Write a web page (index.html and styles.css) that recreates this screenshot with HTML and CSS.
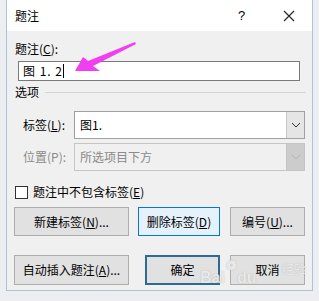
FILE: index.html
```html
<!DOCTYPE html>
<html lang="zh-CN">
<head>
    <meta charset="UTF-8">
    <meta name="viewport" content="width=device-width, initial-scale=1.0">
    <title>题注</title>
    <link rel="stylesheet" href="styles.css">
</head>
<body>
    <div class="window">
        <div class="titlebar">
            <span class="title">题注</span>
            <span class="help">?</span>
            <span class="close">
                <svg width="12" height="12" viewBox="0 0 12 12"><path d="M1 1 L11 11 M11 1 L1 11" stroke="#222" stroke-width="1.1" fill="none"/></svg>
            </span>
        </div>
        <div class="content">
            <div class="field-label">题注(<u>C</u>):</div>
            <div class="caption-input"><span class="caption-text">图 1. 2</span><span class="caret"></span></div>

            <div class="group">
                <span>选项</span>
                <span class="group-line"></span>
            </div>

            <div class="option-row">
                <span class="option-label">标签(<u>L</u>):</span>
                <div class="combo">
                    <span class="combo-text">图1.</span>
                    <span class="combo-btn">
                        <svg width="10" height="6" viewBox="0 0 10 6"><path d="M1 1 L5 5 L9 1" stroke="#333" stroke-width="1" fill="none"/></svg>
                    </span>
                </div>
            </div>
            <div class="option-row second">
                <span class="option-label disabled">位置(P):</span>
                <div class="combo off">
                    <span class="combo-text">所选项目下方</span>
                    <span class="combo-btn">
                        <svg width="10" height="6" viewBox="0 0 10 6"><path d="M1 1 L5 5 L9 1" stroke="#b5b5b5" stroke-width="1" fill="none"/></svg>
                    </span>
                </div>
            </div>

            <div class="check-row">
                <span class="checkbox"></span>
                <span>题注中不包含标签(<u>E</u>)</span>
            </div>

            <div class="button-row">
                <button class="btn wide">新建标签(<u>N</u>)...</button>
                <button class="btn mid focus">删除标签(<u>D</u>)</button>
                <button class="btn narrow gap">编号(<u>U</u>)...</button>
            </div>
            <div class="button-row last">
                <button class="btn wide">自动插入题注(<u>A</u>)...</button>
                <button class="btn narrow default">确定</button>
                <button class="btn narrow gap">取消</button>
            </div>
        </div>
    </div>

    <svg class="arrow" width="319" height="100" viewBox="0 0 319 100">
        <polygon points="75,71 83,57 88,61 135,42 136,44 93,66 100,71" fill="#f03ef0"/>
    </svg>

    <div class="watermark">
        <span>Bai</span><span class="paw">❁</span><span>du</span>
    </div>
    <div class="watermark-jy">经验</div>
</body>
</html>
```

FILE: styles.css
```css
body {
    margin: 0;
    background-color: #eceef2;
    font-family: "Noto Sans CJK SC", "Microsoft YaHei", sans-serif;
    font-size: 12px;
    color: #000;
    width: 319px;
    height: 301px;
    overflow: hidden;
    position: relative;
}

.window {
    margin-left: 6px;
    width: 305px;
    height: 290px;
    background-color: #f0f0f0;
    border: 1px solid #a9c3dd;
    border-top: none;
}

.titlebar {
    height: 31px;
    background-color: #fff;
    display: flex;
    align-items: center;
    padding-left: 8px;
}

.title {
    flex-grow: 1;
    line-height: 16px;
}

.help {
    font-family: "Liberation Sans", sans-serif;
    font-size: 13px;
    width: 12px;
    margin-right: 33px;
}

.close {
    display: flex;
    margin-right: 17px;
}

.content {
    padding: 10px 0 0 8px;
}

.field-label,
.group,
.option-label,
.check-row {
    line-height: 16px;
    height: 16px;
}

u {
    text-decoration: underline;
    text-underline-offset: 1px;
}

.caption-input {
    margin: 4px 0 0 3px;
    height: 18px;
    line-height: 18px;
    background-color: #fff;
    border: 1px solid #7a7a7a;
    padding-left: 4px;
    width: 276px;
    display: flex;
    align-items: center;
}

.caption-text {
    letter-spacing: 1px;
}

.caret {
    display: inline-block;
    width: 1px;
    height: 14px;
    background-color: #000;
}

.group {
    margin-top: 3px;
    display: flex;
    align-items: center;
}

.group-line {
    flex-grow: 1;
    height: 1px;
    background-color: #d5d5d5;
    margin: 1px 6px 0 6px;
}

.option-row {
    margin-top: 11px;
    display: flex;
    align-items: center;
    padding-left: 8px;
}

.option-row.second {
    margin-top: 4px;
}

.option-label {
    width: 51px;
}

.disabled {
    color: #8a8a8a;
}

.combo {
    width: 229px;
    height: 26px;
    border: 1px solid #a0a0a0;
    background-color: #fff;
    display: flex;
    align-items: center;
}

.combo-text {
    flex-grow: 1;
    padding-left: 5px;
    line-height: 16px;
}

.combo-btn {
    width: 17px;
    height: 26px;
    background-color: #e5e5e5;
    border-left: 1px solid #c8c8c8;
    display: flex;
    align-items: center;
    justify-content: center;
}

.combo.off {
    background-color: #f0f0f0;
    border-color: #c5c5c5;
    color: #8a8a8a;
}

.combo.off .combo-btn {
    background-color: #cccccc;
    border-left-color: #c5c5c5;
}

.check-row {
    margin-top: 14px;
    display: flex;
    align-items: center;
    height: 14px;
}

.checkbox {
    width: 11px;
    height: 11px;
    border: 1px solid #333;
    background-color: #fff;
    margin-right: 5px;
}

.button-row {
    margin-top: 8px;
    margin-left: -1px;
    display: flex;
}

.button-row.last {
    margin-top: 19px;
}

.btn {
    font-family: inherit;
    font-size: 12px;
    color: #000;
    height: 29px;
    padding: 0;
    background-color: #e1e1e1;
    border: 1px solid #adadad;
    line-height: 16px;
}

.button-row.last .btn {
    height: 30px;
}

.wide {
    width: 115px;
}

.mid {
    width: 82px;
    margin-left: 9px;
}

.narrow {
    width: 75px;
}

.gap {
    margin-left: 10px;
}

.focus {
    background-color: #e5f1fb;
    border-color: #0078d7;
}

.default {
    margin-left: 16px;
    border: 2px solid #2d6b94;
}

.arrow {
    position: absolute;
    left: 0;
    top: 0;
}

.watermark {
    position: absolute;
    left: 200px;
    top: 257px;
    font-family: "Liberation Sans", sans-serif;
    font-size: 16px;
    font-weight: bold;
    color: rgba(255, 255, 255, 0.75);
    text-shadow: 0 0 1px rgba(120, 120, 120, 0.6);
    display: flex;
    align-items: flex-end;
    line-height: 18px;
}

.paw {
    font-size: 13px;
    margin: 0 0 12px 1px;
}

.watermark-jy {
    position: absolute;
    left: 282px;
    top: 262px;
    font-size: 12px;
    line-height: 14px;
    color: rgba(255, 255, 255, 0.8);
    text-shadow: 0 0 1px rgba(120, 120, 120, 0.6);
}
```
